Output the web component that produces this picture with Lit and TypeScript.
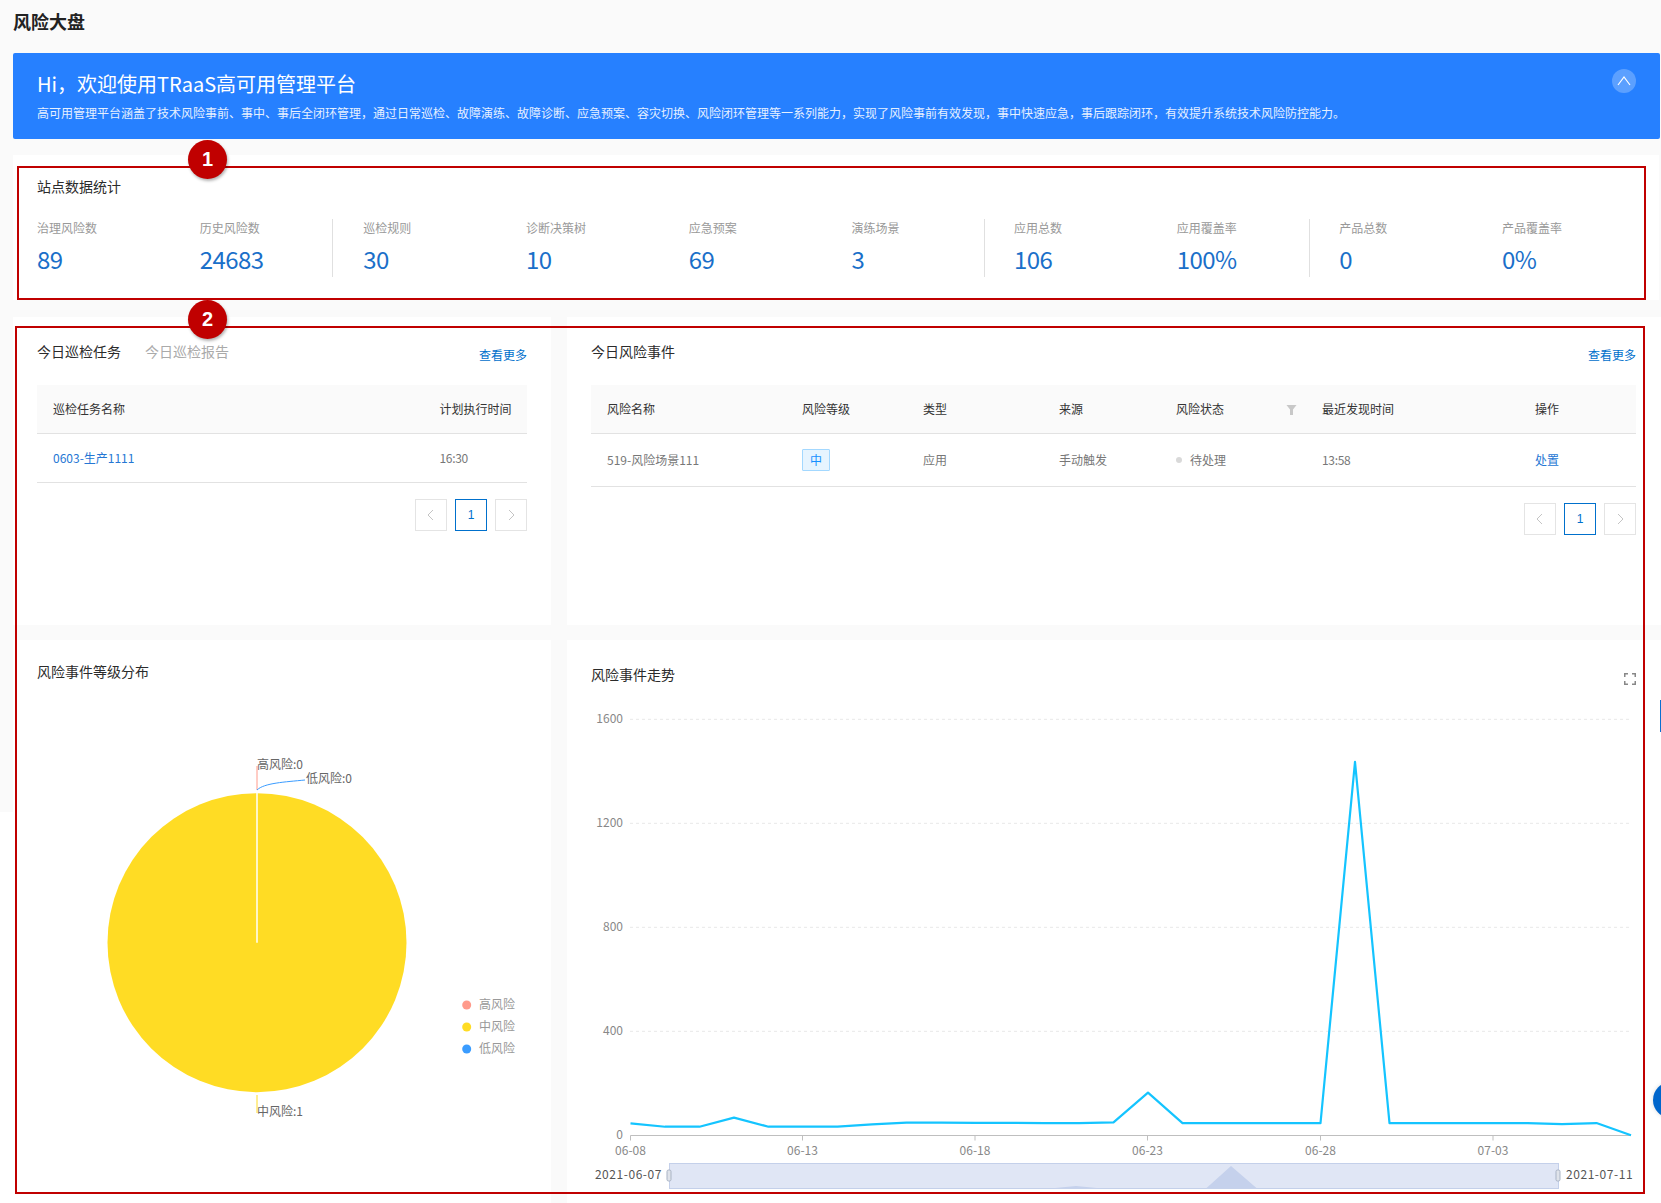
import { LitElement, html, css, svg } from "lit";
import { customElement } from "lit/decorators.js";

const groups = [
  [["治理风险数", "89"], ["历史风险数", "24683"]],
  [["巡检规则", "30"], ["诊断决策树", "10"], ["应急预案", "69"], ["演练场景", "3"]],
  [["应用总数", "106"], ["应用覆盖率", "100%"]],
  [["产品总数", "0"], ["产品覆盖率", "0%"]],
];

const linePts: [number, number][] = [
  46, 33, 33, 68, 33, 33, 33, 42, 49, 49, 48, 48, 47, 47, 50, 164, 47, 47, 47, 47, 47, 1436, 47, 47, 47, 47, 47, 43, 47, 0,
].map((v, i) => [630.5 + i * 34.5, 1135.3 - v * 0.26] as [number, number]);

@customElement("app-root")
export class AppRoot extends LitElement {
  static styles = css`
    :host {
      display: block;
      position: relative;
      width: 1661px;
      height: 1203px;
      overflow: hidden;
      background: #fafafa;
      font-family: "Noto Sans CJK SC", "Liberation Sans", sans-serif;
      color: #333;
      font-size: 12px;
    }
    :host::before {
      content: "";
      position: absolute;
      left: 0;
      top: 812px;
      bottom: 0;
      width: 13px;
      background: #fff;
    }
    .page { padding-left: 13px; position: relative; }
    .page-title {
      height: 42px;
      margin-bottom: 11px;
      line-height: 42px;
      font-size: 18px;
      font-weight: 700;
      color: #222;
    }
    .banner {
      width: 1647px;
      height: 86px;
      box-sizing: border-box;
      padding: 16px 24px 0;
      background: #2680ff;
      border-radius: 2px;
      color: #fff;
      position: relative;
    }
    .banner-title { font-size: 20px; line-height: 30px; }
    .banner-sub { font-size: 12px; line-height: 18px; margin-top: 5px; color: #e6f0ff; }
    .collapse {
      position: absolute;
      right: 24px;
      top: 16px;
      width: 24px;
      height: 24px;
      border-radius: 50%;
      background: rgba(255, 255, 255, 0.25);
      display: flex;
      align-items: center;
      justify-content: center;
    }
    .stats {
      width: 1646px;
      height: 145px;
      box-sizing: border-box;
      margin-top: 16px;
      padding: 21px 24px 0;
      background: #fff;
    }
    .card-title { font-size: 14px; line-height: 20px; color: #2b2b2b; }
    .stat-row { display: flex; margin-top: 23px; height: 58px; }
    .group { display: flex; padding-left: 30px; border-left: 1px solid #e0e0e0; }
    .group:first-child { padding-left: 0; border-left: none; }
    .group:nth-child(n + 3) { padding-left: 29px; }
    .stat { width: 162.8px; margin-top: -1px; }
    .stat:last-child { width: 132.4px; }
    .stat-label { font-size: 12px; line-height: 20px; color: #999; }
    .stat-value { font-size: 24px; line-height: 32px; margin-top: 5px; color: #1a6fc9; letter-spacing: -0.6px; }
    .grid {
      display: grid;
      grid-template-columns: 538px 1094px;
      grid-template-rows: 308px 563px;
      column-gap: 16px;
      row-gap: 15px;
      margin-top: 17px;
    }
    .panel { background: #fff; padding: 24px 24px 0; box-sizing: border-box; min-width: 0; }
    .panel-head { display: flex; justify-content: space-between; height: 44px; }
    .panel-head.wide { width: 1045px; }
    .tabs { display: flex; gap: 24px; }
    .tab { font-size: 14px; line-height: 20px; color: #2b2b2b; }
    .tab.off { color: #aaa; }
    .more { font-size: 12px; line-height: 18px; margin-top: 5px; color: #0070cc; }
    .thead, .trow { display: grid; align-items: center; box-sizing: border-box; }
    .thead { height: 49px; padding-bottom: 1px; background: #fafafa; border-bottom: 1px solid #e2e2e2; color: #333; }
    .trow { border-bottom: 1px solid #e2e2e2; color: #777; }
    .tasks { width: 490px; }
    .tasks .thead, .tasks .trow { grid-template-columns: 386.5px 1fr; padding-left: 16px; }
    .tasks .trow { height: 49px; padding-bottom: 1px; }
    .events { width: 1045px; }
    .events .thead, .events .trow { grid-template-columns: 195px 121px 136px 117px 146px 213px 1fr; padding-left: 16px; }
    .events .trow { height: 53px; padding-bottom: 1px; }
    .link { color: #2577d4; }
    .time { letter-spacing: -0.3px; }
    .filter { display: flex; justify-content: space-between; padding-right: 25px; align-items: center; }
    .filter svg { margin-top: 2px; }
    .tag {
      width: 28px;
      height: 22px;
      box-sizing: border-box;
      border: 1px solid #a3d8ff;
      background: #e6f4ff;
      color: #1890ff;
      display: flex;
      align-items: center;
      justify-content: center;
      border-radius: 1px;
    }
    .status { display: flex; align-items: center; gap: 8px; }
    .dot { width: 6px; height: 6px; border-radius: 50%; background: #d9d9d9; }
    .pager { display: flex; justify-content: flex-end; gap: 8px; margin-top: 16px; }
    .pg {
      width: 32px;
      height: 32px;
      box-sizing: border-box;
      border: 1px solid #e4e4e4;
      display: flex;
      align-items: center;
      justify-content: center;
      color: #0070cc;
      font-family: "Liberation Sans", sans-serif;
    }
    .pg.on { border-color: #0070cc; }
    .chart-panel { padding: 0; position: relative; }
    .chart-title { height: 60px; padding: 21px 0 0 24px; box-sizing: border-box; font-size: 14px; line-height: 20px; color: #2b2b2b; }
    .chart-title.trend { padding-top: 24px; }
    .chart-panel svg { display: block; }
    .chart-panel svg.expand { position: absolute; right: 25px; top: 33px; }
    text { font-family: "Noto Sans CJK SC", "Liberation Sans", sans-serif; font-size: 12px; }
    .t-pie { fill: #666; }
    .t-leg { fill: #999; }
    .t-axis { fill: #888; }
    .t-range { fill: #555; letter-spacing: 0.55px; }
    .mark {
      position: absolute;
      box-sizing: border-box;
      border: 2px solid #c00000;
      pointer-events: none;
    }
    .m1 { left: 17px; top: 166px; width: 1629px; height: 134px; }
    .m2 { left: 15px; top: 326px; width: 1630px; height: 868px; }
    .num {
      position: absolute;
      width: 39px;
      height: 39px;
      left: 188px;
      border-radius: 50%;
      background: #c00000;
      color: #fff;
      font-family: "Liberation Sans", sans-serif;
      font-weight: 700;
      font-size: 20px;
      display: flex;
      align-items: center;
      justify-content: center;
      box-shadow: 1px 2px 3px rgba(0, 0, 0, 0.3);
    }
    .n1 { top: 140px; }
    .n2 { top: 300px; }
    .edge-circle {
      position: absolute;
      left: 1653px;
      top: 1082px;
      width: 36px;
      height: 36px;
      border-radius: 50%;
      background: #0066cc;
      box-shadow: 0 0 4px rgba(0, 0, 0, 0.15);
    }
    .edge-tick { position: absolute; left: 1660px; top: 700px; width: 1px; height: 32px; background: #0a6fd0; }
  `;

  private pager() {
    const chev = (d: string) => html`<svg width="12" height="12" viewBox="0 0 12 12"><path d=${d} fill="none" stroke="#c4c4c4" stroke-width="1"/></svg>`;
    return html`<div class="pager">
      <div class="pg">${chev("M8 1 3 6l5 5")}</div>
      <div class="pg on">1</div>
      <div class="pg">${chev("M4 1l5 5-5 5")}</div>
    </div>`;
  }

  private pie() {
    return html`<svg width="538" height="503" viewBox="13 700 538 503">
      ${svg`
      <circle cx="257" cy="942.7" r="149.5" fill="#ffdc24"/>
      <path d="M257 793V942.7" stroke="#fff" stroke-width="1.5"/>
      <path d="M257 766V790" stroke="#ff9a8b" stroke-width="1"/>
      <path d="M257 790C264 783 285 782 305 780" stroke="#3a9cff" stroke-width="1" fill="none"/>
      <path d="M257 1095V1113" stroke="#ffdc24" stroke-width="1"/>
      <text class="t-pie" x="257" y="769">高风险:0</text>
      <text class="t-pie" x="306" y="783">低风险:0</text>
      <text class="t-pie" x="257" y="1116">中风险:1</text>
      <circle cx="466.7" cy="1005" r="4.5" fill="#ff9a8b"/>
      <circle cx="466.7" cy="1027" r="4.5" fill="#ffdc24"/>
      <circle cx="466.7" cy="1049" r="4.5" fill="#3a9cff"/>
      <text class="t-leg" x="479" y="1009">高风险</text>
      <text class="t-leg" x="479" y="1031">中风险</text>
      <text class="t-leg" x="479" y="1053">低风险</text>
      `}
    </svg>`;
  }

  private trend() {
    const ys = [[1600, 719.3], [1200, 823.3], [800, 927.3], [400, 1031.3]];
    const ticks = [["06-08", 630.5], ["06-13", 802.5], ["06-18", 975], ["06-23", 1147.5], ["06-28", 1320.5], ["07-03", 1493]];
    const d = linePts.map(([x, y], i) => `${i ? "L" : "M"}${x} ${y}`).join("");
    return html`<svg width="1094" height="503" viewBox="567 700 1094 503">
      ${svg`
      ${ys.map(([v, y]) => svg`
        <path d="M630 ${y}H1631" stroke="#e8e8e8" stroke-dasharray="3 3"/>
        <text class="t-axis" x="623" y=${y + 4} text-anchor="end">${v}</text>`)}
      <text class="t-axis" x="623" y="1139" text-anchor="end">0</text>
      <path d="M630.5 1135.5H1631" stroke="#bfbfbf"/>
      ${ticks.map(([l, x]) => svg`
        <path d="M${x} 1135.5v5" stroke="#bfbfbf"/>
        <text class="t-axis" x=${x} y="1155" text-anchor="middle">${l}</text>`)}
      <path d=${d} fill="none" stroke="#14c4ff" stroke-width="2.2" stroke-linejoin="round"/>
      <rect x="669.5" y="1163.5" width="889" height="25" fill="#e0e6f5" stroke="#c4d0ea"/>
      <path d="M1206 1188.5L1231 1166 1257 1188.5ZM1050 1188.5L1076 1186 1102 1188.5Z" fill="#c5d1ec"/>
      <rect x="667" y="1170" width="4" height="11" rx="1.5" fill="#dfe3ea" stroke="#a9b3c4"/>
      <rect x="1556" y="1170" width="4" height="11" rx="1.5" fill="#dfe3ea" stroke="#a9b3c4"/>
      <text class="t-range" x="662" y="1179" text-anchor="end">2021-06-07</text>
      <text class="t-range" x="1566" y="1179">2021-07-11</text>
      `}
    </svg>`;
  }

  render() {
    return html`
      <div class="page">
        <div class="page-title">风险大盘</div>
        <div class="banner">
          <div class="banner-title">Hi，欢迎使用TRaaS高可用管理平台</div>
          <div class="banner-sub">高可用管理平台涵盖了技术风险事前、事中、事后全闭环管理，通过日常巡检、故障演练、故障诊断、应急预案、容灾切换、风险闭环管理等一系列能力，实现了风险事前有效发现，事中快速应急，事后跟踪闭环，有效提升系统技术风险防控能力。</div>
          <div class="collapse"><svg width="14" height="14" viewBox="0 0 14 14"><path d="M1 11 7 3l6 8" fill="none" stroke="#fff" stroke-width="1.2"/></svg></div>
        </div>
        <div class="stats">
          <div class="card-title">站点数据统计</div>
          <div class="stat-row">
            ${groups.map((g) => html`<div class="group">
              ${g.map(([l, v]) => html`<div class="stat"><div class="stat-label">${l}</div><div class="stat-value">${v}</div></div>`)}
            </div>`)}
          </div>
        </div>
        <div class="grid">
          <div class="panel">
            <div class="panel-head">
              <div class="tabs"><div class="tab">今日巡检任务</div><div class="tab off">今日巡检报告</div></div>
              <div class="more">查看更多</div>
            </div>
            <div class="tasks">
              <div class="thead"><div>巡检任务名称</div><div>计划执行时间</div></div>
              <div class="trow"><div class="link">0603-生产1111</div><div class="time">16:30</div></div>
              ${this.pager()}
            </div>
          </div>
          <div class="panel">
            <div class="panel-head wide">
              <div class="tab">今日风险事件</div>
              <div class="more">查看更多</div>
            </div>
            <div class="events">
              <div class="thead">
                <div>风险名称</div><div>风险等级</div><div>类型</div><div>来源</div>
                <div class="filter">风险状态<svg width="11" height="11" viewBox="0 0 11 11"><path d="M.5 1h10L7 5.5V11H4V5.5Z" fill="#c8c8c8"/></svg></div>
                <div>最近发现时间</div><div>操作</div>
              </div>
              <div class="trow">
                <div>519-风险场景111</div><div><div class="tag">中</div></div><div>应用</div><div>手动触发</div>
                <div class="status"><span class="dot"></span>待处理</div><div class="time">13:58</div><div class="link">处置</div>
              </div>
              ${this.pager()}
            </div>
          </div>
          <div class="panel chart-panel">
            <div class="chart-title">风险事件等级分布</div>
            ${this.pie()}
          </div>
          <div class="panel chart-panel">
            <div class="chart-title trend">风险事件走势</div>
            <svg class="expand" width="12" height="12" viewBox="0 0 12 12"><path d="M.75 4V.75H4M8 .75h3.25V4M11.25 8v3.25H8M4 11.25H.75V8" fill="none" stroke="#888" stroke-width="1.5"/></svg>
            ${this.trend()}
          </div>
        </div>
      </div>
      <div class="mark m1"></div>
      <div class="mark m2"></div>
      <div class="num n1">1</div>
      <div class="num n2">2</div>
      <div class="edge-tick"></div>
      <div class="edge-circle"></div>
    `;
  }
}
